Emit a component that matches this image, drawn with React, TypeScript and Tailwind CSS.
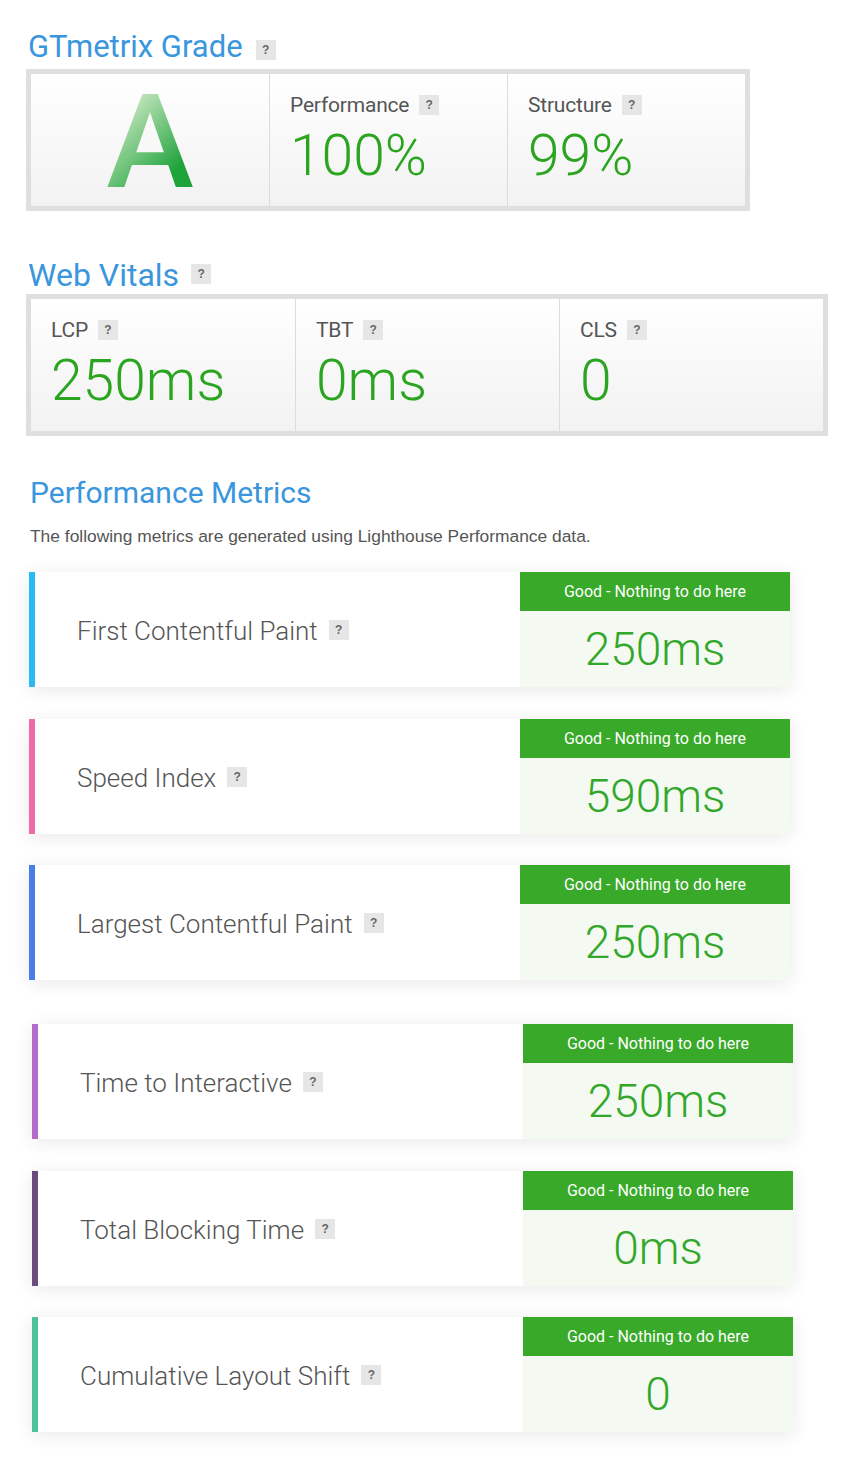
import type { ReactNode } from 'react'

const font = { fontFamily: 'Roboto, "Noto Sans", sans-serif' }

type Metric = {
  label: string
  value: string
  bar: string
  gap: string
}

const metrics: Metric[] = [
  { label: 'First Contentful Paint', value: '250ms', bar: 'border-[#2bb9f3]', gap: 'mt-[24px] ml-[3px]' },
  { label: 'Speed Index', value: '590ms', bar: 'border-[#ef6aa7]', gap: 'mt-[32px] ml-[3px]' },
  { label: 'Largest Contentful Paint', value: '250ms', bar: 'border-[#4a7ee6]', gap: 'mt-[31px] ml-[3px]' },
  { label: 'Time to Interactive', value: '250ms', bar: 'border-[#b26dcc]', gap: 'mt-[44px] ml-[6px]' },
  { label: 'Total Blocking Time', value: '0ms', bar: 'border-[#6c4c7c]', gap: 'mt-[32px] ml-[6px]' },
  { label: 'Cumulative Layout Shift', value: '0', bar: 'border-[#4cc39a]', gap: 'mt-[31px] ml-[6px]' },
]

function Help() {
  return (
    <span
      className="inline-flex h-[20px] w-[20px] shrink-0 items-center justify-center bg-[#e6e6e6] text-[12px] font-bold leading-none text-[#666]"
      style={{ fontFamily: '"Liberation Sans", Arial, sans-serif' }}
    >
      ?
    </span>
  )
}

function Heading({ children, className = '' }: { children: ReactNode; className?: string }) {
  return (
    <div className={`flex h-[36px] items-center gap-[13px] ${className}`}>
      <h2 className="text-[30px] leading-[36px] font-normal text-[#3a96dd]">{children}</h2>
    </div>
  )
}

function StatCell({ label, value, first }: { label: string; value: string; first?: boolean }) {
  return (
    <div
      className={`h-[132px] bg-linear-to-b from-white to-[#f2f2f2] pt-[17px] pl-[20px] ${first ? '' : 'border-l border-[#dcdcdc]'}`}
    >
      <div className="flex h-[28px] items-center gap-[10px]">
        <span className="text-[21px] leading-[28px] tracking-[-0.2px] text-[#555]">{label}</span>
        <Help />
      </div>
      <div className="mt-[5px] text-[57px] leading-[64px] font-light text-[#2ba520]">{value}</div>
    </div>
  )
}

export default function App() {
  return (
    <div className="min-h-screen bg-white pt-[29px] pb-10 pl-[26px]" style={font}>
      <div className="flex h-[36px] items-center gap-[13px] pl-[2px]">
        <h2 className="text-[31px] leading-[36px] text-[#3a96dd]">GTmetrix Grade</h2>
        <span className="mt-[4px]">
          <Help />
        </span>
      </div>

      <div className="mt-[4px] grid w-[724px] grid-cols-3 border-[5px] border-[#dfdfdf]">
        <div className="flex h-[132px] items-center justify-center bg-linear-to-b from-white to-[#f2f2f2] pt-[4px]">
          <span className="inline-block bg-[linear-gradient(135deg,#cbe8c3_15%,#1ea33b_80%)] bg-clip-text text-[132px] leading-[96px] font-medium text-transparent">
            A
          </span>
        </div>
        <StatCell label="Performance" value="100%" />
        <StatCell label="Structure" value="99%" />
      </div>

      <div className="mt-[45px] flex h-[36px] items-center gap-[12px] pl-[2px]">
        <h2 className="mt-[1px] text-[32px] leading-[36px] text-[#3a96dd]">Web Vitals</h2>
        <Help />
      </div>

      <div className="mt-[2px] grid w-[802px] grid-cols-3 border-[5px] border-[#dfdfdf]">
        <StatCell label="LCP" value="250ms" first />
        <StatCell label="TBT" value="0ms" />
        <StatCell label="CLS" value="0" />
      </div>

      <Heading className="mt-[39px] pl-[4px]">Performance Metrics</Heading>
      <p
        className="mt-[13px] pl-[4px] text-[17.4px] leading-[24px] text-[#555]"
        style={{ fontFamily: '"Liberation Sans", Arial, sans-serif' }}
      >
        The following metrics are generated using Lighthouse Performance data.
      </p>

      {metrics.map((m) => (
        <div
          key={m.label}
          className={`flex h-[115px] w-[761px] border-l-[6px] bg-white shadow-[0_3px_18px_rgba(0,0,0,0.09)] ${m.bar} ${m.gap}`}
        >
          <div className="flex flex-1 items-center gap-[11px] pl-[42px]">
            <span className="pt-[2px] text-[26px] leading-none font-light text-[#555]">{m.label}</span>
            <Help />
          </div>
          <div className="flex w-[270px] flex-col">
            <div className="flex h-[39px] items-center justify-center bg-[#38a928] text-[16px] text-white">
              Good - Nothing to do here
            </div>
            <div className="flex flex-1 items-center justify-center bg-[#f4faf2] text-[46px] leading-none font-light text-[#33a72a]">
              {m.value}
            </div>
          </div>
        </div>
      ))}
    </div>
  )
}
